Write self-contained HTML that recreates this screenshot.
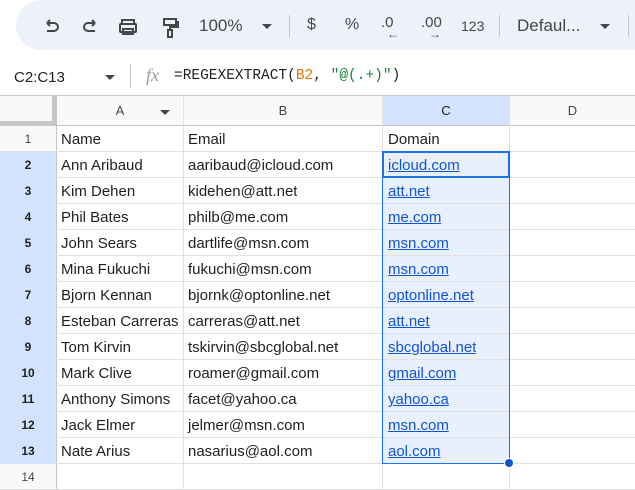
<!DOCTYPE html>
<html><head><meta charset="utf-8"><style>
*{margin:0;padding:0;box-sizing:border-box}
body{width:635px;height:490px;overflow:hidden;background:#fff;font-family:"Liberation Sans",Arial,sans-serif;position:relative;color:#1f1f1f}
.a{position:absolute}
.pill{left:16px;top:0;width:680px;height:50px;background:#edf2fa;border-radius:25px}
.tb{font-size:17px;color:#444746;top:16px}
.sep{width:1px;background:#c7c7c7}
.cell{position:absolute;font-size:15px;line-height:27px;white-space:nowrap;overflow:hidden;padding-left:4px}
.rh{position:absolute;left:0;width:56px;text-align:center;font-size:12px;line-height:26px;color:#444746}
.sel{background:#d3e3fd;font-weight:bold;color:#1f1f1f}
.hl{position:absolute;left:0;width:635px;height:1px;background:#e1e1e1}
.vl{position:absolute;top:96px;height:394px;width:1px;background:#e1e1e1}
.lnk{color:#1155cc;text-decoration:underline}
</style></head><body>
<div class="a pill"></div>
<svg class="a" style="left:40px;top:15px" width="160" height="24" viewBox="0 0 160 24" fill="none" stroke="#444746" stroke-width="2">
<path d="M7 8h7a4 4 0 0 1 0 8H7M7 8l3-3M7 8l3 3"/>
<path d="M55 8h-7a4 4 0 0 0 0 8h7M55 8l-3-3M55 8l-3 3"/>
<rect x="82" y="5" width="12" height="4"/><rect x="80" y="9" width="16" height="8" rx="1"/><rect x="83" y="14" width="10" height="5"/>
<rect x="124" y="4" width="12" height="6"/><path d="M136 7h2v5h-8v3"/><rect x="128" y="15" width="4" height="7"/>
</svg>
<div class="a tb" style="left:199px">100%</div>
<div class="a" style="left:262px;top:24px;border:5px solid transparent;border-top:5px solid #444746"></div>
<div class="a sep" style="left:289px;top:15px;height:22px"></div>
<div class="a tb" style="left:307px;font-size:16px">$</div>
<div class="a tb" style="left:345px;font-size:16px">%</div>
<div class="a tb" style="left:381px;font-size:15px;top:14px">.0</div>
<div class="a tb" style="left:387px;top:27px;font-size:12px;font-weight:bold">←</div>
<div class="a tb" style="left:421px;font-size:15px;top:14px">.00</div>
<div class="a tb" style="left:429px;top:27px;font-size:12px;font-weight:bold">→</div>
<div class="a tb" style="left:461px;font-size:14px;top:18px">123</div>
<div class="a sep" style="left:499px;top:15px;height:22px"></div>
<div class="a tb" style="left:517px">Defaul...</div>
<div class="a" style="left:600px;top:24px;border:5px solid transparent;border-top:5px solid #444746"></div>
<div class="a sep" style="left:628px;top:15px;height:22px"></div>

<div class="a" style="left:14px;top:69px;font-size:15px">C2:C13</div>
<div class="a" style="left:105px;top:75px;border:5px solid transparent;border-top:5px solid #444746"></div>
<div class="a sep" style="left:130px;top:64px;height:24px"></div>
<div class="a" style="left:146px;top:65px;font-size:18px;font-style:italic;color:#999;font-family:'Liberation Serif',serif">fx</div>
<div class="a" style="left:174px;top:68px;font-size:14.5px;font-family:'Liberation Mono',monospace">=REGEXEXTRACT(<span style="color:#e37400">B2</span>, <span style="color:#188038">"@(.+)"</span>)</div>

<div class="a" style="left:0;top:95px;width:635px;height:1px;background:#c7c7c7"></div>
<div class="a" style="left:0;top:96px;width:635px;height:29px;background:#f8f9fa"></div>
<div class="a" style="left:383px;top:96px;width:127px;height:29px;background:#d3e3fd"></div>
<div class="a" style="left:0;top:96px;width:56px;height:29px;background:#f8f9fa;border-right:4px solid #c7c7c7;border-bottom:4px solid #c7c7c7"></div>
<div class="a" style="left:0;top:125px;width:57px;height:365px;background:#f8f9fa"></div>
<div class="a" style="left:0;top:152px;width:56px;height:312px;background:#d3e3fd"></div>
<div class="a" style="left:56px;top:96px;width:1px;height:394px;background:#c7c7c7"></div>
<div class="a" style="left:0;top:125px;width:635px;height:1px;background:#c7c7c7"></div>
<div class="a" style="left:57px;top:103px;width:126px;text-align:center;font-size:13px;color:#444746">A</div>
<div class="a" style="left:160px;top:110px;border:5px solid transparent;border-top:5px solid #444746"></div>
<div class="a" style="left:184px;top:103px;width:198px;text-align:center;font-size:13px;color:#444746">B</div>
<div class="a" style="left:383px;top:103px;width:126px;text-align:center;font-size:13px;color:#1f1f1f">C</div>
<div class="a" style="left:510px;top:103px;width:125px;text-align:center;font-size:13px;color:#444746">D</div>

<div class="a" style="left:383px;top:151px;width:127px;height:313px;background:#e8f0fe"></div>
<div class="vl" style="left:183px"></div><div class="vl" style="left:382px"></div><div class="vl" style="left:509px"></div>
<div class="hl" style="top:151px"></div><div class="hl" style="top:177px"></div><div class="hl" style="top:203px"></div><div class="hl" style="top:229px"></div><div class="hl" style="top:255px"></div><div class="hl" style="top:281px"></div><div class="hl" style="top:307px"></div><div class="hl" style="top:333px"></div><div class="hl" style="top:359px"></div><div class="hl" style="top:385px"></div><div class="hl" style="top:411px"></div><div class="hl" style="top:437px"></div><div class="hl" style="top:463px"></div><div class="hl" style="top:489px"></div>
<div class="a" style="left:382px;top:151px;width:128px;height:313px;border:1px solid #1a73e8"></div>
<div class="a" style="left:382px;top:151px;width:128px;height:27px;border:2px solid #1a73e8"></div>
<div class="a" style="left:504px;top:458px;width:10px;height:10px;border-radius:50%;background:#0b57d0;border:1px solid #fff"></div>

<div class="rh" style="top:126px">1</div>
<div class="cell" style="left:57px;top:126px">Name</div><div class="cell" style="left:184px;top:126px">Email</div><div class="cell" style="left:384px;top:126px">Domain</div>

<div class="rh sel" style="top:152px">2</div><div class="cell" style="left:57px;top:152px;width:126px">Ann Aribaud</div><div class="cell" style="left:184px;top:152px">aaribaud@icloud.com</div><div class="cell lnk" style="left:384px;top:152px">icloud.com</div>
<div class="rh sel" style="top:178px">3</div><div class="cell" style="left:57px;top:178px;width:126px">Kim Dehen</div><div class="cell" style="left:184px;top:178px">kidehen@att.net</div><div class="cell lnk" style="left:384px;top:178px">att.net</div>
<div class="rh sel" style="top:204px">4</div><div class="cell" style="left:57px;top:204px;width:126px">Phil Bates</div><div class="cell" style="left:184px;top:204px">philb@me.com</div><div class="cell lnk" style="left:384px;top:204px">me.com</div>
<div class="rh sel" style="top:230px">5</div><div class="cell" style="left:57px;top:230px;width:126px">John Sears</div><div class="cell" style="left:184px;top:230px">dartlife@msn.com</div><div class="cell lnk" style="left:384px;top:230px">msn.com</div>
<div class="rh sel" style="top:256px">6</div><div class="cell" style="left:57px;top:256px;width:126px">Mina Fukuchi</div><div class="cell" style="left:184px;top:256px">fukuchi@msn.com</div><div class="cell lnk" style="left:384px;top:256px">msn.com</div>
<div class="rh sel" style="top:282px">7</div><div class="cell" style="left:57px;top:282px;width:126px">Bjorn Kennan</div><div class="cell" style="left:184px;top:282px">bjornk@optonline.net</div><div class="cell lnk" style="left:384px;top:282px">optonline.net</div>
<div class="rh sel" style="top:308px">8</div><div class="cell" style="left:57px;top:308px;width:126px">Esteban Carreras</div><div class="cell" style="left:184px;top:308px">carreras@att.net</div><div class="cell lnk" style="left:384px;top:308px">att.net</div>
<div class="rh sel" style="top:334px">9</div><div class="cell" style="left:57px;top:334px;width:126px">Tom Kirvin</div><div class="cell" style="left:184px;top:334px">tskirvin@sbcglobal.net</div><div class="cell lnk" style="left:384px;top:334px">sbcglobal.net</div>
<div class="rh sel" style="top:360px">10</div><div class="cell" style="left:57px;top:360px;width:126px">Mark Clive</div><div class="cell" style="left:184px;top:360px">roamer@gmail.com</div><div class="cell lnk" style="left:384px;top:360px">gmail.com</div>
<div class="rh sel" style="top:386px">11</div><div class="cell" style="left:57px;top:386px;width:126px">Anthony Simons</div><div class="cell" style="left:184px;top:386px">facet@yahoo.ca</div><div class="cell lnk" style="left:384px;top:386px">yahoo.ca</div>
<div class="rh sel" style="top:412px">12</div><div class="cell" style="left:57px;top:412px;width:126px">Jack Elmer</div><div class="cell" style="left:184px;top:412px">jelmer@msn.com</div><div class="cell lnk" style="left:384px;top:412px">msn.com</div>
<div class="rh sel" style="top:438px">13</div><div class="cell" style="left:57px;top:438px;width:126px">Nate Arius</div><div class="cell" style="left:184px;top:438px">nasarius@aol.com</div><div class="cell lnk" style="left:384px;top:438px">aol.com</div>
<div class="rh" style="top:464px">14</div>
</body></html>
